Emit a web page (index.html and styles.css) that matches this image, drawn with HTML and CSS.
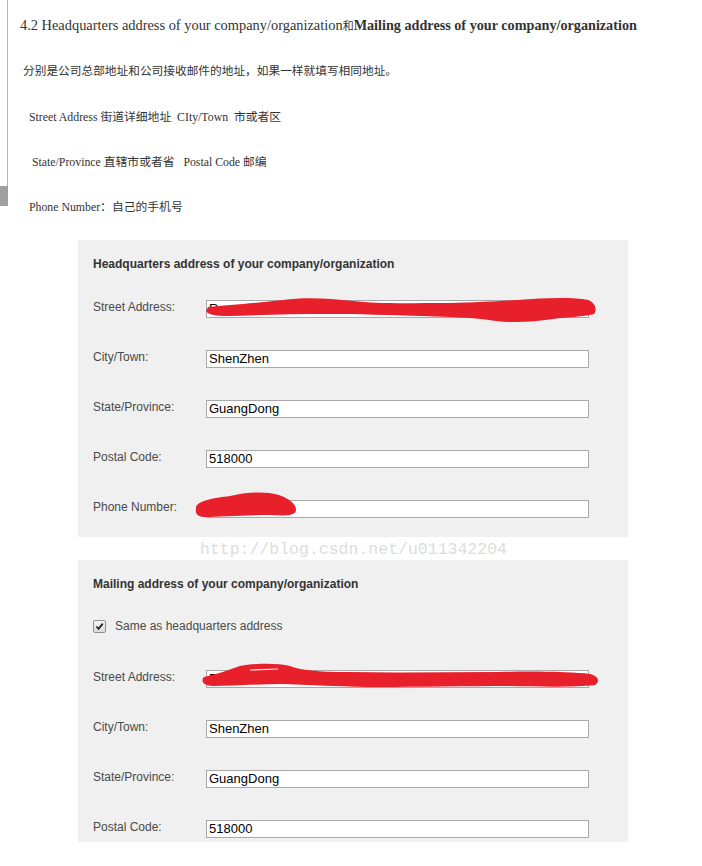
FILE: index.html
```html
<!DOCTYPE html>
<html lang="zh-CN">
<head>
<meta charset="utf-8">
<title>4.2 Headquarters address</title>
<link rel="stylesheet" href="styles.css">
</head>
<body>
<div class="page">
  <div class="intro">
    <div class="rail">
      <div class="rail-line"></div>
      <div class="rail-thumb"></div>
    </div>
    <div class="intro-text">
      <p class="title">4.2 Headquarters address of your company/organization<span class="cjk">和</span><b>Mailing address of your company/organization</b></p>
      <p class="para">分别是公司总部地址和公司接收邮件的地址，如果一样就填写相同地址。</p>
      <p class="note n1">Street Address 街道详细地址&nbsp; CIty/Town&nbsp; 市或者区</p>
      <p class="note n2">State/Province 直辖市或者省&nbsp;&nbsp; Postal Code 邮编</p>
      <p class="note n1">Phone Number：自己的手机号</p>
    </div>
  </div>

  <section class="panel panel-hq">
    <h2 class="panel-title">Headquarters address of your company/organization</h2>
    <div class="rows">
      <div class="row"><span class="label">Street Address:</span><span class="field">R</span></div>
      <div class="row"><span class="label">City/Town:</span><span class="field">ShenZhen</span></div>
      <div class="row"><span class="label">State/Province:</span><span class="field">GuangDong</span></div>
      <div class="row"><span class="label">Postal Code:</span><span class="field">518000</span></div>
      <div class="row"><span class="label">Phone Number:</span><span class="field"></span></div>
    </div>
    <svg class="scribble" width="550" height="300" viewBox="0 0 550 300" aria-hidden="true">
      <path d="M130,67 C150,65 180,63 205,60 C225,57 250,58 275,61 C300,64 330,63 370,63 C400,62 420,61 440,60 C465,58 495,57 510,60 C518,63 519,70 516,74 C505,77 490,77 475,79 C455,82 435,83 418,81 C400,78 375,77 345,76 C310,75 280,74 250,74 C215,74 180,75 150,76 C138,76 130,75 128,71 Z" fill="#e8202c"/>
      <path d="M118,268 C118,261 135,258 152,256 C168,252 188,251 201,255 C212,259 218,264 218,270 C218,276 206,276 192,275 C168,275 142,277 126,277 C119,277 117,273 118,268 Z" fill="#e8202c"/>
    </svg>
  </section>

  <div class="watermark">http://blog.csdn.net/u011342204</div>

  <section class="panel panel-mail">
    <h2 class="panel-title">Mailing address of your company/organization</h2>
    <div class="same">
      <span class="check"><svg width="9" height="9" viewBox="0 0 9 9"><path d="M1.5,4.5 L3.5,6.8 L7.8,1.6" fill="none" stroke="#222" stroke-width="1.8"/></svg></span>
      <span class="same-text">Same as headquarters address</span>
    </div>
    <div class="rows rows-mail">
      <div class="row"><span class="label">Street Address:</span><span class="field">R</span></div>
      <div class="row"><span class="label">City/Town:</span><span class="field">ShenZhen</span></div>
      <div class="row"><span class="label">State/Province:</span><span class="field">GuangDong</span></div>
      <div class="row"><span class="label">Postal Code:</span><span class="field">518000</span></div>
    </div>
    <svg class="scribble" width="550" height="300" viewBox="0 0 550 300" aria-hidden="true">
      <path d="M126,117 C140,114 150,110 162,106 C178,103 200,103 212,106 C222,110 240,112 270,112 C320,113 370,112 420,112 C460,111 495,112 512,114 C521,116 522,122 517,125 C500,127 470,127 430,126 C390,126 340,127 300,127 C270,127 240,125 205,124 C180,124 155,126 135,126 C126,126 122,121 126,117 Z" fill="#e8202c"/>
      <path d="M172,110 L200,109" fill="none" stroke="#fff" stroke-width="1.2" opacity="0.9"/>
    </svg>
  </section>
</div>
</body>
</html>
```

FILE: styles.css
```css
html, body {
  margin: 0;
  padding: 0;
  background: #ffffff;
}

.page {
  width: 702px;
}

.intro {
  display: flex;
  align-items: flex-start;
}

.rail {
  width: 8px;
  flex: none;
  display: flex;
  flex-direction: column;
}

.rail-line {
  height: 186px;
  width: 7px;
  border-right: 1px solid #b4b4b4;
}

.rail-thumb {
  height: 20px;
  width: 8px;
  background: #a0a0a0;
}

.intro-text {
  padding-top: 15px;
  padding-left: 12px;
  font-family: "Liberation Serif", "Noto Sans CJK SC", serif;
  color: #333;
}

.intro-text p {
  margin: 0;
  line-height: 20px;
  white-space: nowrap;
}

.title {
  font-size: 14.4px;
  height: 20px;
}

.title .cjk {
  font-size: 11px;
  line-height: 1;
}

.title b {
  font-weight: bold;
  font-size: 14.2px;
}

.para {
  margin-top: 27px !important;
  padding-left: 3px;
  font-size: 11.7px;
}

.note {
  margin-top: 25px !important;
  font-size: 11.8px;
}

.n1 { padding-left: 9px; }
.n2 { padding-left: 12px; }

.panel {
  position: relative;
  margin-left: 78px;
  width: 550px;
  box-sizing: border-box;
  background: #f0f0f0;
  padding: 16px 15px 19px;
  font-family: "Liberation Sans", Arial, sans-serif;
}

.panel-hq {
  margin-top: 23px;
}

.panel-mail {
  padding-bottom: 4px;
}

.panel-title {
  margin: 0;
  font-size: 12px;
  line-height: 16px;
  font-weight: bold;
  color: #333;
}

.rows {
  display: flex;
  flex-direction: column;
  gap: 32px;
  margin-top: 28px;
}

.rows-mail {
  margin-top: 37px;
}

.row {
  display: flex;
  align-items: flex-start;
  height: 18px;
}

.label {
  width: 113px;
  flex: none;
  font-size: 12px;
  line-height: 14px;
  color: #4a4a4a;
}

.field {
  display: block;
  width: 383px;
  height: 18px;
  box-sizing: border-box;
  border: 1px solid #a9a9a9;
  background: #fff;
  padding: 0 2px;
  font-size: 13px;
  line-height: 16px;
  color: #000;
}

.same {
  display: flex;
  align-items: center;
  margin-top: 27px;
  height: 14px;
}

.check {
  width: 13px;
  height: 13px;
  box-sizing: border-box;
  border: 1px solid #8f8f8f;
  border-radius: 2px;
  background: linear-gradient(#f4f4f4, #dcdcdc);
  display: flex;
  align-items: center;
  justify-content: center;
  margin-right: 9px;
}

.same-text {
  font-size: 12px;
  line-height: 14px;
  color: #4a4a4a;
}

.watermark {
  height: 23px;
  line-height: 25px;
  padding-left: 200px;
  font-family: "Liberation Mono", monospace;
  font-size: 16.5px;
  color: #dcdcdc;
  white-space: nowrap;
}

.scribble {
  position: absolute;
  left: 0;
  top: 0;
  overflow: visible;
  pointer-events: none;
}
```
